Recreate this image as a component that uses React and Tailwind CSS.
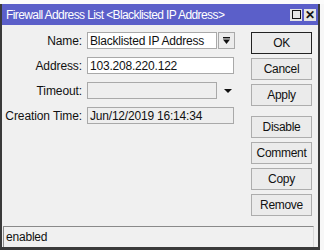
import React from 'react';

const font = { fontFamily: '"Liberation Sans", Arial, sans-serif' };

const DropGlyph = () => (
  <svg width="9" height="9" viewBox="0 0 9 9">
    <rect x="1" y="1" width="7" height="1.4" fill="#111" />
    <polygon points="1,3.5 8,3.5 4.5,8" fill="#111" />
  </svg>
);

const Field = ({ label, value, white, width = 'w-[147px]', children }) => (
  <div className="flex items-center h-[17px]">
    <div className="w-[80px] text-right text-[12px] text-[#111] tracking-[-0.1px]">{label}</div>
    <div className="flex items-center ml-[5px] gap-[1px]">
      <div className={`${width} h-[17px] border border-[#a9a9a9] ${white ? 'bg-white' : 'bg-[#eeeeee]'} flex items-center px-[2px] text-[12px] text-[#111] tracking-[-0.2px] leading-none`}>
        {value}
      </div>
      {children}
    </div>
  </div>
);

const Btn = ({ label, primary }) => (
  <button className={`w-[61px] h-[22px] flex items-center justify-center text-[12px] text-[#111] tracking-[-0.3px] bg-[#ebebeb] border ${primary ? 'border-[#222]' : 'border-[#adadad]'}`}>
    {label}
  </button>
);

export default function App() {
  return (
    <div className="w-[324px] h-[250px] bg-[#f7f7f7] flex flex-col" style={font}>
      <div className="h-[4px] bg-[#fbfbfb]" />
      <div className="w-[320px] flex-1 flex flex-col bg-[#f0f0f0] border-l-2 border-r-2 border-b-[3px] border-[#3a3a3a]">
        {/* title bar */}
        <div className="h-[21px] bg-[#5b5fc9] flex items-center justify-between pl-[4px] pr-[2px]">
          <span className="text-white text-[12px] tracking-[-0.6px]">Firewall Address List &lt;Blacklisted IP Address&gt;</span>
          <div className="flex gap-[2px]">
            <div className="w-[12px] h-[12px] bg-[#e4e4e4] flex items-center justify-center">
              <div className="w-[9px] h-[9px] border-[1.5px] border-[#111]" />
            </div>
            <div className="w-[12px] h-[12px] bg-[#e4e4e4] flex items-center justify-center text-[#111] text-[12px] font-bold leading-none">
              ✕
            </div>
          </div>
        </div>

        {/* body */}
        <div className="flex-1 flex pt-[7px]">
          <div className="flex flex-col gap-[8px]">
            <Field label="Name:" value="Blacklisted IP Address" white width="w-[130px]">
              <div className="w-[17px] h-[17px] border border-[#a9a9a9] bg-[#ececec] flex items-center justify-center">
                <DropGlyph />
              </div>
            </Field>
            <Field label="Address:" value="103.208.220.122" white />
            <Field label="Timeout:" value="" width="w-[130px]">
              <svg width="17" height="17" viewBox="0 0 17 17" className="ml-[1px]">
                <polygon points="5,7 13,7 9,11" fill="#111" />
              </svg>
            </Field>
            <Field label="Creation Time:" value="Jun/12/2019 16:14:34" />
          </div>
          <div className="ml-[15px] flex flex-col">
            <div className="flex flex-col gap-[4px]">
              <Btn label="OK" primary />
              <Btn label="Cancel" />
              <Btn label="Apply" />
            </div>
            <div className="flex flex-col gap-[4px] mt-[10px]">
              <Btn label="Disable" />
              <Btn label="Comment" />
              <Btn label="Copy" />
              <Btn label="Remove" />
            </div>
          </div>
        </div>

        {/* status bar */}
        <div className="h-[21px] ml-[1px] mr-[4px] border-t border-l border-r border-t-[#8a8a8a] border-l-[#8a8a8a] border-r-[#d8d8d8] flex items-center pl-[2px] text-[12px] text-[#111] tracking-[-0.2px]">
          enabled
        </div>
      </div>
    </div>
  );
}
